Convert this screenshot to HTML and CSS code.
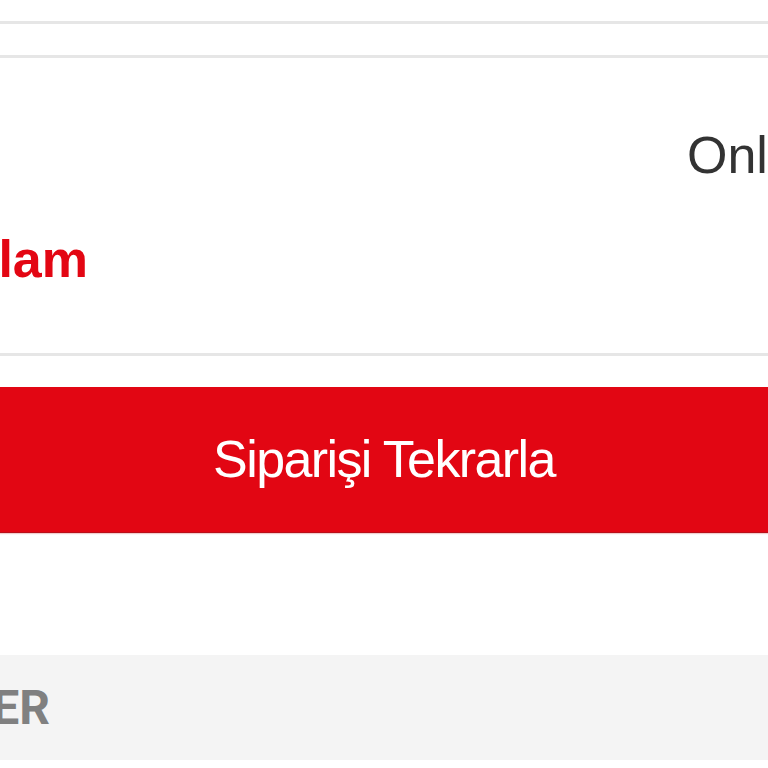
FILE: index.html
```html
<!DOCTYPE html>
<html lang="tr">
<head>
<meta charset="utf-8">
<title>Sipariş Detayı</title>
<link rel="stylesheet" href="styles.css">
</head>
<body>
<main class="order">
  <div class="top-space"></div>
  <hr class="rule">
  <div class="strip"></div>
  <hr class="rule">
  <section class="summary">
    <div class="pay-row">
      <span class="pay-spacer"></span>
      <span class="pay-type">Online Ödeme</span>
    </div>
    <div class="total-row">
      <div class="clip-left total-label-box">
        <span class="total-label">Toplam</span>
      </div>
    </div>
  </section>
  <hr class="rule">
  <div class="action">
    <button class="reorder" type="button">Siparişi Tekrarla</button>
  </div>
  <section class="products">
    <div class="clip-left products-title-box">
      <h2 class="products-title">ÜRÜNLER</h2>
    </div>
  </section>
</main>
</body>
</html>
```

FILE: styles.css
```css
html, body {
  margin: 0;
  padding: 0;
  background: #ffffff;
  overflow: hidden;
}

body {
  font-family: "Liberation Sans", Arial, sans-serif;
  width: 768px;
  height: 768px;
}

.order {
  display: flex;
  flex-direction: column;
}

.top-space {
  height: 21px;
}

.rule {
  margin: 0;
  border: 0;
  height: 3px;
  background: #e6e6e6;
}

.strip {
  height: 31px;
}

/* summary card: payment type on top, total label below */
.summary {
  display: flex;
  flex-direction: column;
  gap: 44px;
  padding: 67px 0 64px;
}

.pay-row {
  display: flex;
  white-space: nowrap;
}

.pay-spacer {
  flex: 0 0 687px;
}

.pay-type {
  font-size: 52px;
  line-height: 60px;
  color: #333333;
}

.total-row {
  display: flex;
}

/* text that runs off the left edge of the row */
.clip-left {
  display: flex;
  justify-content: flex-end;
  overflow: hidden;
  white-space: nowrap;
}

.total-label-box {
  width: 88px;
}

.total-label {
  font-size: 52px;
  line-height: 60px;
  font-weight: 700;
  color: #e30613;
}

.action {
  padding-top: 31px;
}

.reorder {
  display: flex;
  align-items: center;
  justify-content: center;
  width: 100%;
  height: 146px;
  margin: 0;
  padding: 0 0 2px;
  border: 0;
  border-bottom: 1px solid #b8101a;
  background: #e20613;
  color: #ffffff;
  font-family: "Liberation Sans", Arial, sans-serif;
  font-size: 52px;
  line-height: 60px;
  letter-spacing: -1.6px;
  box-shadow: 0 1px 1px rgba(200, 60, 60, 0.25);
}

.products {
  margin-top: 122px;
  height: 105px;
  background: #f4f4f4;
  display: flex;
  align-items: center;
}

.products-title-box {
  width: 50px;
}

.products-title {
  margin: 0;
  font-family: Roboto, "Liberation Sans", sans-serif;
  font-size: 48px;
  line-height: 48px;
  font-weight: 700;
  color: #808080;
}
```
